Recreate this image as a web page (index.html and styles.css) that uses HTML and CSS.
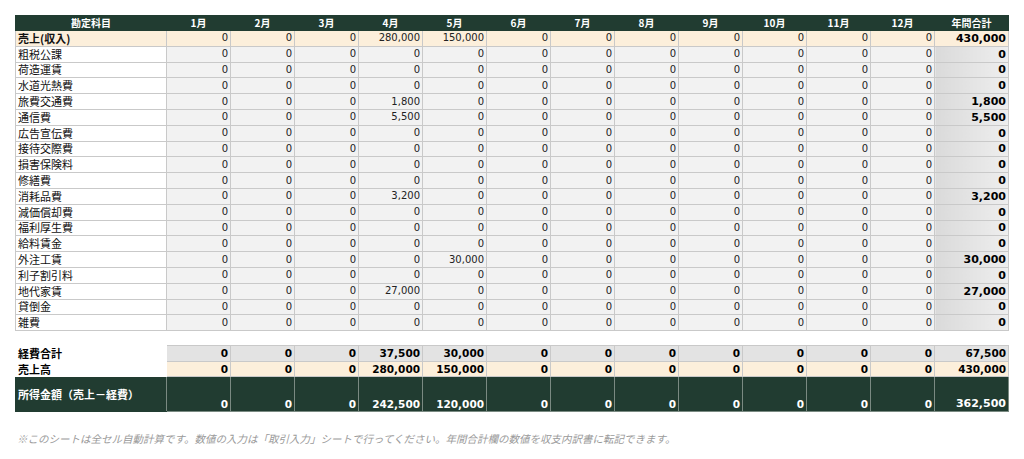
FILE: index.html
```html
<!DOCTYPE html>
<html lang="ja">
<head>
<meta charset="utf-8">
<title>月別集計</title>
<link rel="stylesheet" href="styles.css">
</head>
<body>
<div class="sheet">
<table class="grid main">
<colgroup><col class="c-label"><col class="c-m"><col class="c-m"><col class="c-m"><col class="c-m"><col class="c-m"><col class="c-m"><col class="c-m"><col class="c-m"><col class="c-m"><col class="c-m"><col class="c-m"><col class="c-m"><col class="c-total"></colgroup>
<thead>
<tr class="head"><th>勘定科目</th><th>1月</th><th>2月</th><th>3月</th><th>4月</th><th>5月</th><th>6月</th><th>7月</th><th>8月</th><th>9月</th><th>10月</th><th>11月</th><th>12月</th><th>年間合計</th></tr>
</thead>
<tbody>
<tr class="sales"><td class="lbl">売上(収入)</td><td>0</td><td>0</td><td>0</td><td>280,000</td><td>150,000</td><td>0</td><td>0</td><td>0</td><td>0</td><td>0</td><td>0</td><td>0</td><td class="tot">430,000</td></tr>
<tr><td class="lbl">粗税公課</td><td>0</td><td>0</td><td>0</td><td>0</td><td>0</td><td>0</td><td>0</td><td>0</td><td>0</td><td>0</td><td>0</td><td>0</td><td class="tot">0</td></tr>
<tr><td class="lbl">荷造運賃</td><td>0</td><td>0</td><td>0</td><td>0</td><td>0</td><td>0</td><td>0</td><td>0</td><td>0</td><td>0</td><td>0</td><td>0</td><td class="tot">0</td></tr>
<tr><td class="lbl">水道光熱費</td><td>0</td><td>0</td><td>0</td><td>0</td><td>0</td><td>0</td><td>0</td><td>0</td><td>0</td><td>0</td><td>0</td><td>0</td><td class="tot">0</td></tr>
<tr><td class="lbl">旅費交通費</td><td>0</td><td>0</td><td>0</td><td>1,800</td><td>0</td><td>0</td><td>0</td><td>0</td><td>0</td><td>0</td><td>0</td><td>0</td><td class="tot">1,800</td></tr>
<tr><td class="lbl">通信費</td><td>0</td><td>0</td><td>0</td><td>5,500</td><td>0</td><td>0</td><td>0</td><td>0</td><td>0</td><td>0</td><td>0</td><td>0</td><td class="tot">5,500</td></tr>
<tr><td class="lbl">広告宣伝費</td><td>0</td><td>0</td><td>0</td><td>0</td><td>0</td><td>0</td><td>0</td><td>0</td><td>0</td><td>0</td><td>0</td><td>0</td><td class="tot">0</td></tr>
<tr><td class="lbl">接待交際費</td><td>0</td><td>0</td><td>0</td><td>0</td><td>0</td><td>0</td><td>0</td><td>0</td><td>0</td><td>0</td><td>0</td><td>0</td><td class="tot">0</td></tr>
<tr><td class="lbl">損害保険料</td><td>0</td><td>0</td><td>0</td><td>0</td><td>0</td><td>0</td><td>0</td><td>0</td><td>0</td><td>0</td><td>0</td><td>0</td><td class="tot">0</td></tr>
<tr><td class="lbl">修繕費</td><td>0</td><td>0</td><td>0</td><td>0</td><td>0</td><td>0</td><td>0</td><td>0</td><td>0</td><td>0</td><td>0</td><td>0</td><td class="tot">0</td></tr>
<tr><td class="lbl">消耗品費</td><td>0</td><td>0</td><td>0</td><td>3,200</td><td>0</td><td>0</td><td>0</td><td>0</td><td>0</td><td>0</td><td>0</td><td>0</td><td class="tot">3,200</td></tr>
<tr><td class="lbl">減価償却費</td><td>0</td><td>0</td><td>0</td><td>0</td><td>0</td><td>0</td><td>0</td><td>0</td><td>0</td><td>0</td><td>0</td><td>0</td><td class="tot">0</td></tr>
<tr><td class="lbl">福利厚生費</td><td>0</td><td>0</td><td>0</td><td>0</td><td>0</td><td>0</td><td>0</td><td>0</td><td>0</td><td>0</td><td>0</td><td>0</td><td class="tot">0</td></tr>
<tr><td class="lbl">給料賃金</td><td>0</td><td>0</td><td>0</td><td>0</td><td>0</td><td>0</td><td>0</td><td>0</td><td>0</td><td>0</td><td>0</td><td>0</td><td class="tot">0</td></tr>
<tr><td class="lbl">外注工賃</td><td>0</td><td>0</td><td>0</td><td>0</td><td>30,000</td><td>0</td><td>0</td><td>0</td><td>0</td><td>0</td><td>0</td><td>0</td><td class="tot">30,000</td></tr>
<tr><td class="lbl">利子割引料</td><td>0</td><td>0</td><td>0</td><td>0</td><td>0</td><td>0</td><td>0</td><td>0</td><td>0</td><td>0</td><td>0</td><td>0</td><td class="tot">0</td></tr>
<tr><td class="lbl">地代家賃</td><td>0</td><td>0</td><td>0</td><td>27,000</td><td>0</td><td>0</td><td>0</td><td>0</td><td>0</td><td>0</td><td>0</td><td>0</td><td class="tot">27,000</td></tr>
<tr><td class="lbl">貸倒金</td><td>0</td><td>0</td><td>0</td><td>0</td><td>0</td><td>0</td><td>0</td><td>0</td><td>0</td><td>0</td><td>0</td><td>0</td><td class="tot">0</td></tr>
<tr><td class="lbl">雑費</td><td>0</td><td>0</td><td>0</td><td>0</td><td>0</td><td>0</td><td>0</td><td>0</td><td>0</td><td>0</td><td>0</td><td>0</td><td class="tot">0</td></tr>
</tbody>
</table>

<table class="grid summary">
<colgroup><col class="c-label"><col class="c-m"><col class="c-m"><col class="c-m"><col class="c-m"><col class="c-m"><col class="c-m"><col class="c-m"><col class="c-m"><col class="c-m"><col class="c-m"><col class="c-m"><col class="c-m"><col class="c-total"></colgroup>
<tbody>
<tr class="expense"><td class="lbl">経費合計</td><td>0</td><td>0</td><td>0</td><td>37,500</td><td>30,000</td><td>0</td><td>0</td><td>0</td><td>0</td><td>0</td><td>0</td><td>0</td><td>67,500</td></tr>
<tr class="revenue"><td class="lbl">売上高</td><td>0</td><td>0</td><td>0</td><td>280,000</td><td>150,000</td><td>0</td><td>0</td><td>0</td><td>0</td><td>0</td><td>0</td><td>0</td><td>430,000</td></tr>
<tr class="income"><td class="lbl">所得金額（売上－経費）</td><td>0</td><td>0</td><td>0</td><td>242,500</td><td>120,000</td><td>0</td><td>0</td><td>0</td><td>0</td><td>0</td><td>0</td><td>0</td><td>362,500</td></tr>
</tbody>
</table>

<p class="note">※このシートは全セル自動計算です。数値の入力は「取引入力」シートで行ってください。年間合計欄の数値を収支内訳書に転記できます。</p>
</div>
</body>
</html>
```

FILE: styles.css
```css
* { box-sizing: border-box; }

html, body {
  margin: 0;
  padding: 0;
  background: #ffffff;
}

body {
  font-family: "DejaVu Sans", "Noto Sans CJK JP", sans-serif;
  color: #000;
}

.sheet {
  padding: 15px 0 0 15px;
  width: 1024px;
}

.grid {
  border-collapse: collapse;
  table-layout: fixed;
  width: 993px;
}

.c-label { width: 151px; }
.c-m { width: 64px; }
.c-total { width: 74px; }

.grid th,
.grid td {
  padding: 0 2px;
  white-space: nowrap;
  overflow: hidden;
  line-height: 1;
}

/* header */
.head th {
  height: 15px;
  background: #213c31;
  color: #ffffff;
  font-size: 10px;
  font-weight: bold;
  text-align: center;
  border: 1px solid #213c31;
  font-family: "Noto Sans CJK JP", "DejaVu Sans", sans-serif;
}

/* body rows */
.main tbody td {
  height: 15.8px;
  border: 1px solid #c9c9c9;
  background: #f2f2f2;
  font-size: 10px;
  text-align: right;
  color: #222;
}

.main tbody td.lbl {
  background: #ffffff;
  text-align: left;
  font-size: 11px;
  font-family: "Noto Sans CJK JP", sans-serif;
  color: #111;
}

.main tbody td.tot {
  background: linear-gradient(to right, #dadada, #eeeeee);
  font-weight: bold;
  font-size: 11px;
  color: #000;
}

.main tbody tr.sales td,
.main tbody tr.sales td.lbl,
.main tbody tr.sales td.tot {
  background: #fcefdb;
}

.main tbody tr.sales td.lbl {
  font-weight: bold;
}

/* summary */
.summary {
  margin-top: 14px;
}

.summary td {
  font-size: 10.5px;
  font-weight: bold;
  text-align: right;
  border: 1px solid #c9c9c9;
}

.summary td.lbl {
  text-align: left;
  font-size: 11px;
  font-family: "Noto Sans CJK JP", sans-serif;
  border: 1px solid transparent;
  background: #ffffff;
}

.expense td {
  height: 16px;
  background: #e3e3e3;
}

.revenue td {
  height: 15px;
  background: #fcefdb;
}

.income td {
  height: 35px;
  background: #213c31;
  color: #ffffff;
  vertical-align: bottom;
  padding-bottom: 2px;
  border: 1px solid #7a8a82;
}

.summary .income td.lbl {
  background: #213c31;
  color: #ffffff;
  vertical-align: middle;
  padding-bottom: 0;
  border: 1px solid #213c31;
  border-right-color: #7a8a82;
}

.summary tr:last-child td:last-child {
  font-size: 11px;
}

.note {
  margin: 19px 0 0 2px;
  font-family: "Noto Sans CJK JP", sans-serif;
  font-size: 10.5px;
  font-style: italic;
  color: #9a9a9a;
}
```
